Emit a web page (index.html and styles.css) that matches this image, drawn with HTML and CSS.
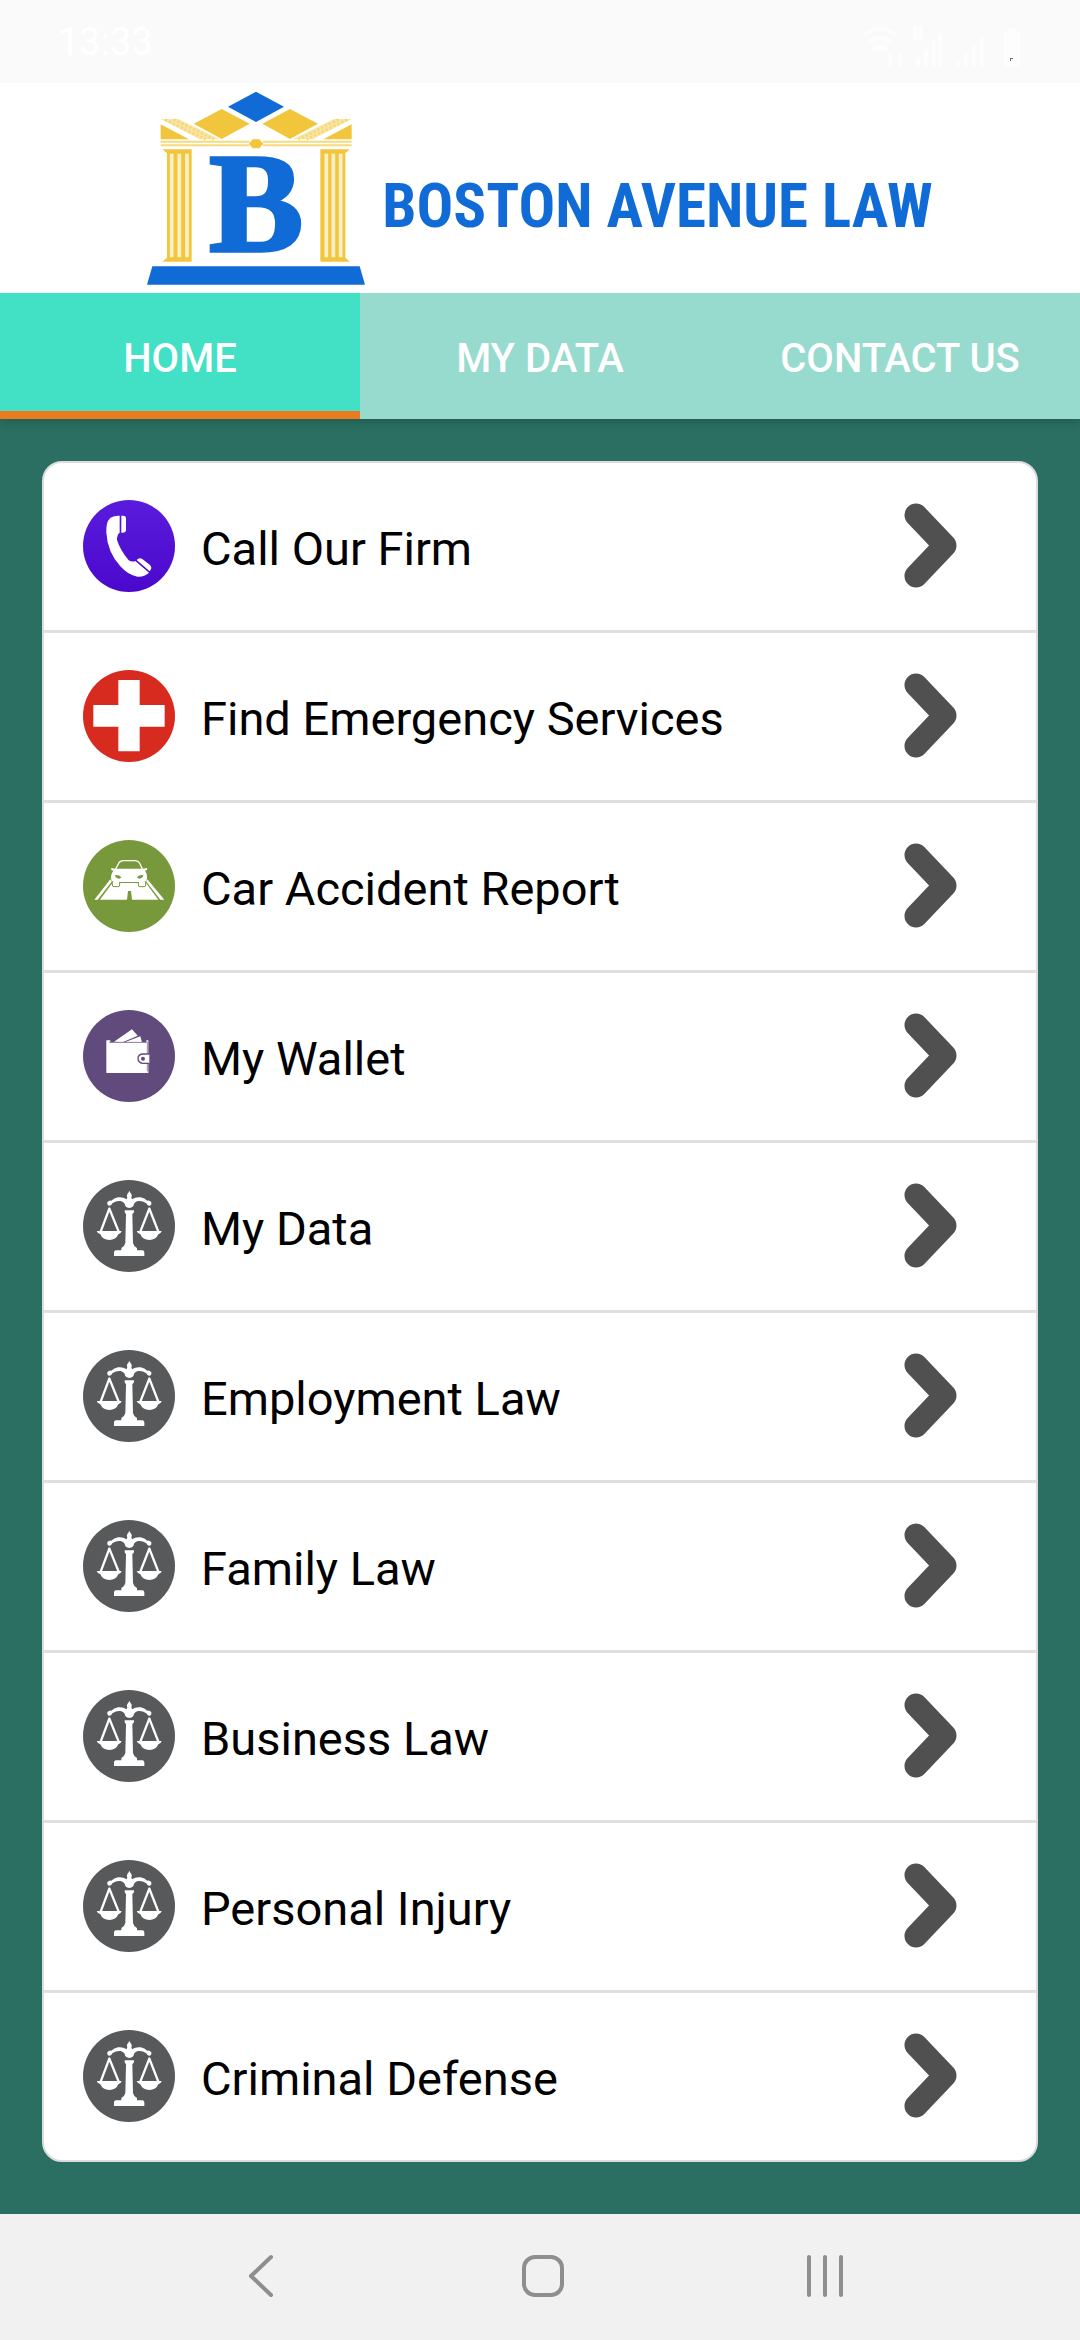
FILE: index.html
```html
<!DOCTYPE html>
<html lang="en">
<head>
    <meta charset="UTF-8">
    <meta name="viewport" content="width=device-width, initial-scale=1.0">
    <title>Boston Avenue Law</title>
    <link rel="stylesheet" href="styles.css">
</head>
<body>
    <!-- shared icons -->
    <svg class="sprite" aria-hidden="true">
        <symbol id="arrow" viewBox="0 0 53 85">
            <path d="M12 12 L41 42.500 L12 73" fill="none" stroke="#505050" stroke-width="23" stroke-linecap="round" stroke-linejoin="round"/>
        </symbol>
        <symbol id="scales" viewBox="39 45 276 276">
            <circle cx="177" cy="183" r="138" fill="#58595b"/>
            <g fill="#fff">
                <path d="M178 77 q-2 6 -6 10 q-3 5 0 10 l-2 6 q-12 -8 -26 -6 q-12 2 -20 10 q-8 -1 -12 5 q-2 7 4 10 q8 2 11 -7 q13 -9 25 -7 q8 2 12 8 q1 11 14 13 q13 -2 14 -13 q4 -6 12 -8 q12 -2 25 7 q3 9 11 7 q6 -3 4 -10 q-4 -6 -12 -5 q-8 -8 -20 -10 q-14 -2 -26 6 l-2 -6 q3 -5 0 -10 q-4 -4 -6 -10z"/>
                <path d="M164 136 h28 v6 l-5 6 l2 86 q2 10 12 15 v7 h17 q5 1 5 6 v11 h-91 v-11 q0 -5 5 -6 h17 v-7 q10 -5 12 -15 l2 -86 l-4 -6z"/>
                <path d="M80 198 h75 q-2 8 -10 10 q-7 17 -27 17 q-20 0 -27 -17 q-8 -2 -11 -10z"/>
                <path d="M200 198 h75 q-2 8 -10 10 q-7 17 -27 17 q-20 0 -27 -17 q-8 -2 -11 -10z"/>
            </g>
            <path d="M118 131 L92 200 M118 131 L146 200 M238 131 L211 200 M238 131 L265 200" stroke="#fff" stroke-width="7" stroke-linecap="round"/>
        </symbol>
    </svg>

    <div class="status_bar">
        <span class="time">13:33</span>
        <svg class="status_icons" viewBox="0 0 170 48" width="170" height="48" aria-hidden="true">
            <g fill="none" stroke="#fff" stroke-width="4">
                <path d="M4 17 Q20 4 36 17 M9 24 Q20 15 31 24 M14 31 Q20 26 26 31"/>
                <path d="M30 48 V36 M40 48 V34 M58 48 V40 M66 48 V32 M74 48 V22 M80 48 V16 M98 48 V42 M106 48 V36 M114 48 V26 M122 48 V18"/>
                <path d="M55 22 V10 H61 V16 H55 M59 16 L62 22"/>
            </g>
            <path d="M144 14 h4 v-4 h8 v4 h4 v34 h-16z" fill="#fff"/>
            <path d="M150 40 h3 v1 h-2 v2 h-1z" fill="#333"/>
        </svg>
    </div>

    <header class="header">
        <svg class="logo" viewBox="50 33 660 588" width="220" height="196" aria-hidden="true">
            <g fill="#f2c63c">
                <path d="M190 134 L274 90 L358 134 L274 180z"/>
                <path d="M396 134 L479 90 L563 134 L479 180z"/>
                <path d="M91 136 L176 181 H91z M664 136 L579 181 H664z"/>
                <path d="M356 194 L367 181 H387 L399 194 L387 208 H367z"/>
                <path d="M96 211 H184 V548 H96 L110 536 V223z"/>
                <path d="M570 211 H658 L645 223 V536 L658 548 H570z"/>
            </g>
            <path d="M91 120 H144 L268 181 H208z M664 120 H611 L487 181 H547z" fill="#f9e6a6"/>
            <path d="M104 122 L226 181 M130 121 L250 181 M651 122 L529 181 M625 121 L505 181" stroke="#f5d777" stroke-width="8" stroke-dasharray="7 6"/>
            <path d="M91 188 H358 M91 199 H358 M398 188 H664 M398 199 H664" stroke="#f7da7d" stroke-width="6"/>
            <path d="M124 224 V535 M147 224 V535 M170 224 V535 M588 224 V535 M609 224 V535 M631 224 V535" stroke="#fdf0c8" stroke-width="11"/>
            <path d="M293 83 L377 38 L461 83 L377 129z" fill="#116bd6"/>
            <path d="M66 562 H688 L704 617 H50z" fill="#116bd6"/>
            <text class="logo_letter" x="378" y="516" text-anchor="middle">B</text>
        </svg>
        <h1 class="logo_name">BOSTON AVENUE LAW</h1>
    </header>

    <nav class="tabs">
        <a href="#home" class="tab on">HOME</a>
        <a href="#data" class="tab">MY DATA</a>
        <a href="#contact" class="tab">CONTACT US</a>
    </nav>

    <main class="content">
        <ul class="menu">
            <li><a href="#call">
                <svg class="icon" viewBox="39 60 276 276">
                    <linearGradient id="violet" x1="0" y1="0" x2="0" y2="1">
                        <stop offset="0" stop-color="#5a1cdc"/>
                        <stop offset="1" stop-color="#4a08cc"/>
                    </linearGradient>
                    <circle cx="177" cy="198" r="138" fill="url(#violet)"/>
                    <path d="M149 107 V158 Q141 163 141 180 Q151 211 176 241 Q186 247 196 243 L237 278 Q222 292 202 290 Q175 286 151 259 Q112 215 109 158 Q108 126 120 115 Q130 106 149 107z" fill="#fff"/>
                    <path d="M154 107 H159 Q168 107 168 115 V150 Q168 159 154 158z M200 240 Q206 233 216 236 L239 254 Q247 261 242 269 L239 274z" fill="#fff"/>
                </svg>
                <span class="label">Call Our Firm</span>
                <svg class="arrow"><use href="#arrow"/></svg>
            </a></li>
            <li><a href="#emergency">
                <svg class="icon" viewBox="39 60 276 276">
                    <circle cx="177" cy="198" r="138" fill="#d72b20"/>
                    <path d="M145 90 H209 V165 H284 V230 H209 V304 H145 V230 H70 V165 H145z" fill="#fff"/>
                </svg>
                <span class="label">Find Emergency Services</span>
                <svg class="arrow"><use href="#arrow"/></svg>
            </a></li>
            <li><a href="#accident">
                <svg class="icon" viewBox="39 45 276 276">
                    <circle cx="177" cy="183" r="138" fill="#78983c"/>
                    <path d="M121 163 L73 224 H83 L126 169z M232 163 L283 224 H271 L228 169z M127 174 L90 224 H171 L174 198 H183 L186 224 H265 L228 174z" fill="#fff"/>
                    <path d="M127 168 H149 V180 Q149 185 144 185 H132 Q127 185 127 180z M205 168 H227 V180 Q227 185 222 185 H210 Q205 185 205 180z" fill="#fff" stroke="#78983c" stroke-width="3"/>
                    <path d="M137 132 L146 115 Q149 108 160 107 H196 Q206 108 209 115 L217 132" fill="none" stroke="#fff" stroke-width="4"/>
                    <path d="M124 129 L136 131 H218 L231 129 V135 L225 137 Q232 146 231 157 Q231 170 222 171 H133 Q123 170 123 157 Q123 146 130 137 L124 135z" fill="#fff"/>
                    <path d="M135 150 Q148 149 154 157 Q149 164 142 160 Q135 157 135 150z M220 150 Q207 149 201 157 Q206 164 213 160 Q220 157 220 150z" fill="#78983c"/>
                </svg>
                <span class="label">Car Accident Report</span>
                <svg class="arrow"><use href="#arrow"/></svg>
            </a></li>
            <li><a href="#wallet">
                <svg class="icon" viewBox="39 45 276 276">
                    <circle cx="177" cy="183" r="138" fill="#614b7c"/>
                    <path d="M132 140 L186 103 L203 122 L158 142z M164 142 L211 124 L216 142z" fill="#fff"/>
                    <path d="M109 136 H121 V142 H229 V136 H235 V234 H109z" fill="#fff"/>
                    <path d="M117 142 H230 M232 140 V174 M232 207 V229" fill="none" stroke="#614b7c" stroke-width="2"/>
                    <path d="M238 177 H217 Q204 179 204 191 Q205 203 217 205 H238" fill="#fff" stroke="#614b7c" stroke-width="4"/>
                    <circle cx="219" cy="191" r="6" fill="#614b7c"/>
                </svg>
                <span class="label">My Wallet</span>
                <svg class="arrow"><use href="#arrow"/></svg>
            </a></li>
            <li><a href="#mydata">
                <svg class="icon"><use href="#scales"/></svg>
                <span class="label">My Data</span>
                <svg class="arrow"><use href="#arrow"/></svg>
            </a></li>
            <li><a href="#employment">
                <svg class="icon"><use href="#scales"/></svg>
                <span class="label">Employment Law</span>
                <svg class="arrow"><use href="#arrow"/></svg>
            </a></li>
            <li><a href="#family">
                <svg class="icon"><use href="#scales"/></svg>
                <span class="label">Family Law</span>
                <svg class="arrow"><use href="#arrow"/></svg>
            </a></li>
            <li><a href="#business">
                <svg class="icon"><use href="#scales"/></svg>
                <span class="label">Business Law</span>
                <svg class="arrow"><use href="#arrow"/></svg>
            </a></li>
            <li><a href="#injury">
                <svg class="icon"><use href="#scales"/></svg>
                <span class="label">Personal Injury</span>
                <svg class="arrow"><use href="#arrow"/></svg>
            </a></li>
            <li><a href="#criminal">
                <svg class="icon"><use href="#scales"/></svg>
                <span class="label">Criminal Defense</span>
                <svg class="arrow"><use href="#arrow"/></svg>
            </a></li>
        </ul>
    </main>

    <footer class="nav_bar">
        <button type="button" aria-label="Back">
            <svg viewBox="0 0 44 44"><path d="M32 3 L12 22 L32 41"/></svg>
        </button>
        <button type="button" aria-label="Home">
            <svg viewBox="0 0 44 44"><rect x="3" y="3" width="38" height="38" rx="11"/></svg>
        </button>
        <button type="button" aria-label="Recent apps">
            <svg viewBox="0 0 44 44"><path d="M6 3 V41 M22 3 V41 M38 3 V41"/></svg>
        </button>
    </footer>
</body>
</html>
```
FILE: styles.css
```css
* {margin:0; padding:0; box-sizing:border-box; list-style:none;}
body {
    display:flex; flex-direction:column; min-height:100vh;
    font-family:Roboto, "Liberation Sans", sans-serif; background:#2a6f61;
}
a {color:inherit; text-decoration:none;}
.sprite {display:none;}

/* status bar */
.status_bar {
    display:flex; justify-content:space-between; align-items:center;
    height:83px; padding:0 50px 0 58px; background:#fafafa;
}
.status_bar .time {font-size:38px; color:#fff;}
.status_icons {opacity:0.7;}

/* logo */
.header {
    display:flex; justify-content:center; align-items:center; gap:15px;
    height:210px; background:#fff;
}
.logo_letter {
    font-family:"Liberation Serif", serif; font-weight:700; font-size:425px;
    fill:#116bd6; stroke:#116bd6; stroke-width:10px;
}
.logo_name {
    padding-top:36px;
    font-family:"Liberation Sans Narrow", "Roboto Condensed", "Open Sans Condensed", Roboto, sans-serif;
    font-size:61px; font-weight:700; color:#116bd6; white-space:nowrap;
}

/* tabs */
.tabs {display:flex; height:126px; background:#97dace; box-shadow:0 4px 8px rgba(0,0,0,0.15);}
.tab {
    flex:1; display:flex; justify-content:center; align-items:center;
    padding-top:12px; border-bottom:8px solid transparent;
    font-size:40px; font-weight:500; color:#fff;
}
.tab.on {background:#42e0c4; border-bottom-color:#ec7a1e;}

/* menu list */
.content {flex:1; padding:42px 42px 51px;}
.menu {background:#fff; border:2px solid #dcdcdf; border-radius:20px; overflow:hidden;}
.menu li {border-bottom:3px solid #dfdfdf;}
.menu li:last-child {border-bottom:0;}
.menu a {display:flex; align-items:center; height:167px; padding:0 79px 2px 39px;}
.menu .icon {width:92px; height:92px;}
.menu .label {flex:1; padding:5px 0 0 26px; font-size:47px; color:#000;}
.menu .arrow {width:53px; height:85px;}

/* system buttons */
.nav_bar {display:flex; height:126px; padding:0 114px 2px 120px; background:#f1f1f1;}
.nav_bar button {flex:1; display:flex; justify-content:center; align-items:center; border:0; background:none;}
.nav_bar svg {
    width:44px; height:44px; fill:none; stroke:#8e8e8e; stroke-width:4;
    stroke-linecap:round; stroke-linejoin:round;
}
```
